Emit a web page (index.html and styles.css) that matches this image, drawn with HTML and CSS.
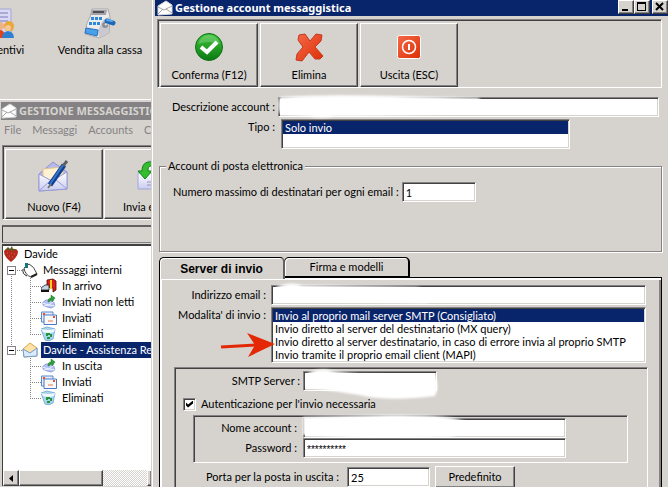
FILE: index.html
```html
<!DOCTYPE html>
<html lang="it">
<head>
<meta charset="utf-8">
<title>Gestione account messaggistica</title>
<link rel="stylesheet" href="styles.css">
</head>
<body>
<svg class="defs" aria-hidden="true">
  <defs>
    <linearGradient id="gGreen" x1="0" y1="0" x2="0" y2="1"><stop offset="0" stop-color="#3fc43a"/><stop offset="1" stop-color="#0b7a12"/></linearGradient>
    <linearGradient id="gRed" x1="0" y1="0" x2="1" y2="1"><stop offset="0" stop-color="#f5694a"/><stop offset="1" stop-color="#dd2f04"/></linearGradient>
    <linearGradient id="gEnv" x1="0" y1="0" x2="0" y2="1"><stop offset="0" stop-color="#ffffff"/><stop offset="1" stop-color="#c9ccf0"/></linearGradient>
    <symbol id="letter" viewBox="0 0 16 16">
      <path d="M1 6 L9 1 L15 5 V14 L1 15 Z" fill="#fff" stroke="#d8d8d8" stroke-width="1"/>
      <path d="M1 7 L7 10 L15 6 M1 14 L6 9 M15 13 L9 9" fill="none" stroke="#a5a5a5" stroke-width="1"/>
    </symbol>
    <symbol id="outbox" viewBox="0 0 16 16">
      <path d="M1 9 L5 6 H12 L14 12 L10 14 L3 12 Z" fill="#b3c2f8" stroke="#8fa2dc" stroke-width="1"/>
      <path d="M1 9 L8 11 L13 7 M3 12 L8 11 L14 12" fill="none" stroke="#eef2ff"/>
      <path d="M7 8 C7 5 8 4 10 4 V1 L14 4 L11 8 V6 C9 6 9 8 7 8 Z" fill="#2f9e35" stroke="#187a22" stroke-width=".5"/>
    </symbol>
    <symbol id="sent" viewBox="0 0 16 16">
      <path d="M.5 2 H12 V12 H.5 Z" fill="#e6ecfb" stroke="#5b86cc"/>
      <path d="M3 5 H15.500 V14.500 H3 Z" fill="#fbf8f6" stroke="#4a7ac6"/>
      <path d="M2 4 H4 M12 7 H14" stroke="#e2552c" stroke-width="2"/>
      <path d="M7 11 H12" stroke="#e07a4c" stroke-width="1"/>
    </symbol>
    <symbol id="bin" viewBox="0 0 16 16">
      <path d="M0 3 L6 1 L14 3 L12 13 Q8 16 4 14 Z" fill="#a9d4ee" stroke="#7fb2d4"/>
      <path d="M0 3 Q7 5 14 3 L13 6 Q7 8 2 6 Z" fill="#eef8fe"/>
      <path d="M6 10 V8 H9 M10 8 V11 M9 12 H6" fill="none" stroke="#23963a" stroke-width="2"/>
    </symbol>
  </defs>
</svg>

<div class="screen">
  <div class="left">
    <nav class="desktop">
      <a class="shortcut first" href="#">
        <svg width="32" height="32" viewBox="0 0 32 32">
          <path d="M4 1 H27 V25 H4 Z" fill="#d9d9f3" stroke="#a5a5d6"/>
          <path d="M8 5 H24 M8 9 H24 M8 13 H24" stroke="#a9aad8" stroke-width="2"/>
          <circle cx="16" cy="18" r="4" fill="#f0b183"/><path d="M10 30 Q10 22 16 22 Q21 22 21 30 Z" fill="#e2431b"/>
          <path d="M20 18 a5 5 0 0 1 10 0 q0 3 -2 5 h-6 q-2 -2 -2 -5 Z" fill="#e8a93a"/>
          <circle cx="24" cy="20" r="3" fill="#f6c79a"/><path d="M18 30 Q18 24 24 23 Q30 24 30 30 Z" fill="#2f7fd0"/>
        </svg>
        <span>Preventivi</span>
      </a>
      <a class="shortcut" href="#">
        <svg width="32" height="32" viewBox="0 0 32 32">
          <path d="M8 1 H24 L26 9 L25 25 L15 30 L1 26 L3 15 L6 9 Z" fill="#ececec" stroke="#a9a9ad"/>
          <path d="M19 12 L25 9 V25 L15 30 L14 22 Z" fill="#c9c9cf"/>
          <path d="M8 2 H23 L22 7 H7 Z" fill="#a2a2a8"/>
          <path d="M9 4 H20" stroke="#4e4e54" stroke-width="2"/>
          <g fill="#2d87da"><rect x="7" y="9" width="3" height="3"/><rect x="11" y="9" width="3" height="3"/><rect x="15" y="9" width="3" height="3"/><rect x="5" y="14" width="3" height="3"/><rect x="9" y="14" width="3" height="3"/><rect x="13" y="14" width="3" height="3"/></g>
          <path d="M2 20 L14 22 L13 28 L1 25 Z" fill="#4ba0ea" stroke="#2470bd"/>
          <circle cx="21" cy="17" r="3" fill="#8d8d93"/>
          <path d="M21 17 L25 14" stroke="#ddd" stroke-width="2"/>
          <path d="M23 13 L29 15" stroke="#1d67b8" stroke-width="5" stroke-linecap="round"/>
          <path d="M23 12 L28 13" stroke="#58aaf0" stroke-width="2" stroke-linecap="round"/>
        </svg>
        <span>Vendita alla cassa</span>
      </a>
    </nav>

    <section class="mailwin">
      <header class="caption idle"><svg width="16" height="16"><use href="#letter"/></svg><h2>GESTIONE MESSAGGISTICA</h2></header>
      <nav class="menu"><a href="#">File</a><a href="#">Messaggi</a><a href="#">Accounts</a><a href="#">Configurazione</a></nav>
      <div class="toolbar small">
        <button class="tool" type="button">
          <svg width="32" height="32" viewBox="0 0 32 32">
            <path d="M1 14 L15 2 L29 12 V29 L1 31 Z" fill="#b7b9e6" stroke="#8f91cf"/>
            <path d="M5 9 L25 7 V20 L5 22 Z" fill="#fff1d2" stroke="#e0c594"/>
            <path d="M1 14 L14 21 L29 12 V29 L1 31 Z" fill="url(#gEnv)" stroke="#9a9cd6"/>
            <path d="M1 31 L13 20 M29 29 L17 19" stroke="#9a9cd6" fill="none"/>
            <path d="M12 25 L26 5" stroke="#123f8e" stroke-width="5"/><path d="M12 24 L25 5" stroke="#3477cf" stroke-width="2"/>
            <path d="M25 6 L29 1" stroke="#5d6066" stroke-width="3"/><path d="M10 28 L13 24" stroke="#777" stroke-width="2"/>
          </svg>
          <span>Nuovo (F4)</span>
        </button>
        <button class="tool" type="button">
          <svg width="32" height="32" viewBox="0 0 32 32">
            <path d="M11 1 H30 V12 H11 Z" fill="#f2f2fb" stroke="#b6b7dd"/>
            <path d="M1 13 H31 V29 H1 Z" fill="url(#gEnv)" stroke="#a5a6d8"/>
            <path d="M10 22 H16 M10 25 H16" stroke="#9091c6"/>
            <path d="M15 2 C8 1 5 5 5 11 H1 L8 19 L15 11 H11 C11 7 12 6 15 6 Z" fill="#35bd2d" stroke="#14821a"/>
          </svg>
          <span>Invia e ricevi</span>
        </button>
      </div>
      <div class="strip"></div>
      <div class="treebox">
        <ul class="tree">
          <li class="row"><svg class="ic" width="16" height="16" viewBox="0 0 16 16"><path d="M1 5 Q3 2 8 3 Q13 2 15 5 Q15 11 8 16 Q1 11 1 5 Z" fill="#b52a1e"/><path d="M2 4 L5 1 L7 3 L9 0 L10 3 L14 3 L10 5 L7 4 Z" fill="#5d5a22"/><path d="M4 7 h1 M8 7 h1 M11 8 h1 M6 10 h1 M9 11 h1" stroke="#e0664e"/></svg><span class="lbl">Davide</span></li>
          <li class="row"><span class="cell start"><span class="box"></span></span><svg class="ic" width="16" height="16" viewBox="0 0 16 16"><path d="M2 6 L7 2 Q12 4 15 12 L9 15 Q3 13 2 6 Z" fill="#fff" stroke="#444"/><path d="M1 7 Q0 12 5 14" fill="none" stroke="#222" stroke-width="1"/><path d="M3 1 H6 V6 H3 Z" fill="#13787c"/><path d="M9 15 L15 12" stroke="#222" stroke-width="2"/></svg><span class="lbl">Messaggi interni</span></li>
          <li class="row"><span class="cell line"></span><span class="cell line arm"></span><svg class="ic" width="16" height="16" viewBox="0 0 16 16"><path d="M6 2 L12 1 L15 3 V12 L12 14 V10 L6 9 Z" fill="#d8201a" stroke="#4a0b08" stroke-width=".8"/><path d="M10 2 V11" stroke="#ffcf1c" stroke-width="2"/><path d="M0 10 L4 7 H8 V12 H0 Z" fill="#c6d4e6" stroke="#222" stroke-width=".8"/><path d="M0 13 H8" stroke="#111" stroke-width="2"/></svg><span class="lbl">In arrivo</span></li>
          <li class="row"><span class="cell line"></span><span class="cell line arm"></span><svg class="ic" width="16" height="16"><use href="#outbox"/></svg><span class="lbl">Inviati non letti</span></li>
          <li class="row"><span class="cell line"></span><span class="cell line arm"></span><svg class="ic" width="16" height="16"><use href="#sent"/></svg><span class="lbl">Inviati</span></li>
          <li class="row"><span class="cell line"></span><span class="cell end arm"></span><svg class="ic" width="16" height="16"><use href="#bin"/></svg><span class="lbl">Eliminati</span></li>
          <li class="row"><span class="cell end"><span class="box"></span></span><svg class="ic" width="16" height="16" viewBox="0 0 16 16"><path d="M1 7 L8 1 L15 6 V14 L2 15 Z" fill="#ffe3a6" stroke="#d9a648"/><path d="M1 7 L8 11 L15 6 V14 L2 15 Z" fill="#dcebfb" stroke="#6d9cce"/></svg><span class="lbl on">Davide - Assistenza Remota</span></li>
          <li class="row"><span class="cell"></span><span class="cell line arm"></span><svg class="ic" width="16" height="16"><use href="#outbox"/></svg><span class="lbl">In uscita</span></li>
          <li class="row"><span class="cell"></span><span class="cell line arm"></span><svg class="ic" width="16" height="16"><use href="#sent"/></svg><span class="lbl">Inviati</span></li>
          <li class="row"><span class="cell"></span><span class="cell end arm"></span><svg class="ic" width="16" height="16"><use href="#bin"/></svg><span class="lbl">Eliminati</span></li>
        </ul>
        <div class="hscroll">
          <button class="sbtn" type="button" aria-label="Scorri a sinistra"><svg width="4" height="7" viewBox="0 0 4 7"><path d="M4 0 V7 L0 3.500 Z"/></svg></button>
          <div class="thumb"></div>
          <div class="track"></div>
          <button class="sbtn" type="button" aria-label="Scorri a destra"></button>
        </div>
      </div>
    </section>
  </div>

  <main class="dialog">
    <header class="caption"><svg width="16" height="16"><use href="#letter"/></svg><h1>Gestione account messaggistica</h1>
      <div class="winbtns">
        <button type="button" aria-label="Riduci"><svg width="12" height="10" viewBox="0 0 12 10"><path d="M2 7 H8 V9 H2 Z"/></svg></button>
        <button type="button" aria-label="Ingrandisci"><svg width="12" height="10" viewBox="0 0 12 10"><path d="M1 0 H10 V9 H1 Z M2 2 V8 H9 V2 Z" fill-rule="evenodd"/></svg></button>
        <button type="button" class="close" aria-label="Chiudi"><svg width="12" height="10" viewBox="0 0 12 10"><path d="M2 1 L9 8 M9 1 L2 8" stroke="#000" stroke-width="2"/></svg></button>
      </div>
    </header>
    <div class="body">
      <div class="toolbar">
        <button class="tool" type="button">
          <svg width="32" height="32" viewBox="0 0 32 32"><circle cx="16" cy="16" r="13.500" fill="url(#gGreen)" stroke="#0c7314"/><path d="M5 13 Q8 4 16 4 Q24 4 27 13 Q16 9 5 13Z" fill="#fff" opacity=".2"/><path d="M8 16 L14 21 L24 11" fill="none" stroke="#fff" stroke-width="4"/></svg>
          <span>Conferma (F12)</span>
        </button>
        <button class="tool" type="button">
          <svg width="32" height="32" viewBox="0 0 32 32"><path d="M6 4 L12 3 L17 10 L23 3 L29 4 L28 10 L22 16 L30 25 L27 28 L22 28 L16 21 L9 30 L3 29 L4 23 L10 16 L5 9 Z" fill="url(#gRed)" stroke="#c43a20" stroke-linejoin="round"/></svg>
          <span>Elimina</span>
        </button>
        <button class="tool" type="button">
          <svg width="32" height="32" viewBox="0 0 32 32"><rect x="4.500" y="4.500" width="23" height="23" rx="2" fill="url(#gRed)" stroke="#fff"/><circle cx="16" cy="16" r="6.500" fill="none" stroke="#fff" stroke-width="1.500"/><path d="M16 13 V19" stroke="#fff" stroke-width="2"/></svg>
          <span>Uscita (ESC)</span>
        </button>
      </div>

      <form class="form">
        <div class="line top">
          <label for="descr">Descrizione account :</label>
          <div class="field smudged">
            <input id="descr" type="text">
            <svg class="smudge" width="224" height="28" viewBox="0 0 224 28"><path d="M6 4 Q50 1 120 3 L204 5 Q216 12 206 20 Q100 23 60 23 Q48 26 34 23 L6 21 Q3 12 6 4 Z"/></svg>
          </div>
        </div>
        <div class="line top type">
          <label for="tipo">Tipo :</label>
          <select id="tipo" class="list two" size="2"><option selected>Solo invio</option></select>
        </div>

        <fieldset class="group">
          <legend>Account di posta elettronica</legend>
          <div class="line max"><label for="max">Numero massimo di destinatari per ogni email :</label><input id="max" class="short" type="text" value="1"></div>
        </fieldset>

        <div class="tabs" role="tablist">
          <button class="tab active" type="button" role="tab" aria-selected="true">Server di invio</button>
          <button class="tab" type="button" role="tab" aria-selected="false">Firma e modelli</button>
        </div>
        <div class="page">
          <div class="line mail">
            <label for="mail">Indirizzo email :</label>
            <div class="field smudged">
              <input id="mail" type="text">
              <svg class="smudge" width="190" height="26" viewBox="0 0 190 26"><path d="M9 6 Q22 0 36 4 L150 6 Q172 12 160 22 L110 21 L9 19 Z"/></svg>
            </div>
          </div>
          <div class="line mail mode">
            <label for="mode">Modalita' di invio :</label>
            <div class="field">
              <select id="mode" class="list four" size="4">
                <option selected>Invio al proprio mail server SMTP (Consigliato)</option>
                <option>Invio diretto al server del destinatario (MX query)</option>
                <option>Invio diretto al server destinatario, in caso di errore invia al proprio SMTP</option>
                <option>Invio tramite il proprio email client (MAPI)</option>
              </select>
              <svg class="arrow" width="58" height="26" viewBox="0 0 58 26"><path d="M1 15 L36 13" stroke="#e42806" stroke-width="3"/><path d="M27 1 L55 12 L28 25 L35 13 Z" fill="#e42806"/></svg>
            </div>
          </div>

          <div class="panel smtp">
            <div class="line server">
              <label for="smtp">SMTP Server :</label>
              <div class="field smudged">
                <input id="smtp" type="text">
                <svg class="smudge" width="150" height="38" viewBox="0 0 150 38"><path d="M7 7 Q20 0 34 4 L60 7 L136 9 Q141 20 136 29 Q90 35 60 28 L7 20 Z"/></svg>
              </div>
            </div>
            <label class="check"><input type="checkbox" checked><span>Autenticazione per l'invio necessaria</span></label>
            <div class="panel auth">
              <div class="line cred">
                <label for="user">Nome account :</label>
                <div class="field smudged">
                  <input id="user" type="text">
                  <svg class="smudge" width="180" height="30" viewBox="0 0 180 30"><path d="M4 3 L90 1 Q150 0 168 8 Q170 20 150 23 L70 25 L4 21 Z"/></svg>
                </div>
              </div>
              <div class="line cred"><label for="pwd">Password :</label><div class="field"><input id="pwd" class="pwd" type="text" value="**********"></div></div>
            </div>
            <div class="line port">
              <label for="port">Porta per la posta in uscita :</label><input id="port" class="short" type="text" value="25">
              <button class="push" type="button">Predefinito</button>
            </div>
          </div>
        </div>
      </form>
    </div>
  </main>
</div>
</body>
</html>
```
FILE: styles.css
```css
* { box-sizing: border-box; }

body {
  margin: 0;
  height: 100vh;
  overflow: hidden;
  background: #d6d3ce;
  color: #000;
  font: 11px/16px Lato, "Liberation Sans", Arial, sans-serif;
}

button, input, select { font: inherit; color: inherit; border-radius: 0; margin: 0; }
button { background: #d6d3ce; padding: 0; }
a { color: inherit; text-decoration: none; }
h1, h2 { margin: 0; font: bold 11px/16px "Noto Sans", "Liberation Sans", sans-serif; white-space: nowrap; }
svg { flex: none; display: block; }
.defs { position: absolute; width: 0; height: 0; }

.screen { display: grid; grid-template-columns: 152px minmax(0, 1fr); height: 100%; }
.left { display: flex; flex-direction: column; min-width: 0; padding-right: 1px; overflow: hidden; }
.left > * { min-width: 0; overflow: hidden; }

/* Desktop shortcuts */
.desktop { display: flex; height: 99px; padding-top: 8px; flex: none; }
.shortcut { flex: none; width: 100px; display: flex; flex-direction: column; align-items: center; gap: 2px; }
.shortcut.first { margin-left: -50px; }

/* Title bars */
.caption { display: flex; align-items: center; gap: 2px; height: 16px; background: #08246b; color: #fff; padding-left: 2px; }
.caption.idle { height: 18px; background: #848284; color: #d6d3ce; padding-left: 0; flex: none; overflow: hidden; }

/* Mail window */
.mailwin { flex: 1; min-height: 0; display: flex; flex-direction: column; border-top: 1px solid #fff; padding: 2px 0 0 1px; }
.menu { display: flex; gap: 11px; padding: 2px 3px 7px; color: #848284; white-space: nowrap; }

.toolbar {
  display: flex;
  gap: 2px;
  padding: 2px 1px 0;
  height: 69px;
  border: 1px solid;
  border-color: #848284 #fff #fff #848284;
  box-shadow: inset 1px 1px #424142;
}
.toolbar.small { height: 75px; flex: none; margin-left: 1px; overflow: hidden; border-right: 0; gap: 1px; }
.tool {
  flex: none;
  width: 98px;
  height: 64px;
  margin: 1px -1px 0 1px;
  display: flex;
  flex-direction: column;
  align-items: center;
  gap: 4px;
  padding-top: 7px;
  border: 1px solid;
  border-color: #fff #424142 #424142 #fff;
  box-shadow: inset -1px -1px #848284;
  white-space: nowrap;
}
.toolbar.small .tool { height: 70px; gap: 7px; padding-top: 10px; }
.strip { flex: none; height: 18px; margin: 5px 0 1px 1px; border-top: 2px solid #636163; border-left: 1px solid #424142; border-bottom: 1px solid #848284; }

.treebox {
  flex: 1;
  min-height: 0;
  display: flex;
  flex-direction: column;
  justify-content: space-between;
  background: #fff;
  margin: 0 0 1px 1px;
  border-top: 2px solid #424142;
  border-left: 1px solid #424142;
}
.tree { list-style: none; margin: 0; padding: 0; }
.row { display: flex; height: 16px; white-space: nowrap; }
.lbl { padding: 0 2px; margin-left: 3px; }
.lbl.on { background: #08246b; color: #fff; }
.cell { flex: none; width: 19px; height: 16px; display: block; padding: 4px; background-repeat: no-repeat; }
.cell.line, .cell.start, .cell.end { background-image: repeating-linear-gradient(#848284 0 1px, transparent 1px 2px), repeating-linear-gradient(90deg, #848284 0 1px, transparent 1px 2px); }
.cell.line { background-size: 1px 16px, 0 0; background-position: 8px 0, 8px 8px; }
.cell.end { background-size: 1px 8px, 11px 1px; background-position: 8px 0, 8px 8px; }
.cell.start { background-size: 1px 8px, 11px 1px; background-position: 8px 8px, 8px 8px; }
.cell.line.arm { background-size: 1px 16px, 11px 1px; }
.box { display: block; width: 9px; height: 9px; border: 1px solid #848284; background: linear-gradient(#000, #000) center / 5px 1px no-repeat #fff; }

.hscroll { display: flex; height: 16px; background: #d6d3ce; }
.sbtn, .thumb { border: 1px solid; border-color: #fff #424142 #424142 #fff; box-shadow: inset -1px -1px #848284; }
.sbtn { flex: none; width: 16px; display: grid; place-items: center; }
.thumb { flex: none; width: 84px; }
.track { flex: 1; background: repeating-conic-gradient(#fff 0 25%, #d6d3ce 0 50%) 0 0 / 2px 2px; }
.sbtn:last-child { width: 4px; border-right: 0; }

/* Account dialog */
.dialog { border-left: 1px solid #fff; padding-left: 2px; min-width: 0; height: 100%; overflow: hidden; }
.winbtns { margin-left: auto; display: flex; align-self: flex-start; }
.winbtns button {
  width: 16px;
  height: 14px;
  padding: 1px;
  border: 1px solid;
  border-color: #fff #424142 #424142 #fff;
  box-shadow: inset -1px -1px #848284;
  overflow: hidden;
}
.winbtns .close { margin-left: 2px; }
.body { padding: 3px 6px 0 2px; }

input[type="text"] {
  display: block;
  width: 100%;
  height: 20px;
  padding: 0 3px;
  background: #fff;
  border: 1px solid;
  border-color: #848284 #fff #fff #848284;
  box-shadow: inset 1px 1px #424142, inset -1px -1px #d6d3ce;
  outline: 0;
}
input[type="text"].short { width: 80px; flex: none; }
input.pwd { font: 10px/16px "Liberation Sans", Arial, sans-serif; padding-top: 3px; }

.line { display: flex; align-items: center; gap: 6px; }
.line label { flex: none; text-align: right; white-space: nowrap; }
.line.max { gap: 3px; }
.line.max input[type="text"].short { width: 74px; }
.field { position: relative; flex: 1; min-width: 0; }

.list {
  display: block;
  width: 100%;
  padding: 1px;
  background: #fff;
  border: 1px solid;
  border-color: #848284 #fff #fff #848284;
  box-shadow: inset 1px 1px #424142, inset -1px -1px #d6d3ce;
  outline: 0;
  overflow: hidden;
  scrollbar-width: none;
}
.list option { height: 13px; min-height: 13px; padding: 0 2px; line-height: 13px; }
.list option:checked { background: linear-gradient(#08246b, #08246b); color: #fff; -webkit-text-fill-color: #fff; }
.list.two { width: 289px; height: 30px; }
.list.four { height: 56px; }

.form { padding-left: 2px; }
.line.top { margin: 9px 3px 0 0; gap: 3px; }
.line.top label { width: 116px; }
.line.top.type { margin-top: 2px; align-items: flex-start; gap: 6px; }

.group { margin: 8px 0 5px; padding: 7px 13px 49px; border: 1px solid #848284; box-shadow: 1px 1px #fff, inset 1px 1px #fff; min-width: 0; }
.group legend { padding: 0 2px; margin-left: -7px; line-height: 18px; background: #d6d3ce; }

.tabs { display: flex; align-items: flex-end; }
.tab { height: 20px; width: 126px; border: 1px solid #000; border-right-width: 2px; border-radius: 5px 5px 0 0; box-shadow: inset 1px 1px #fff; margin-left: -1px; }
.tab.active { height: 22px; margin: 0 0 -2px; border-bottom: 0; border-right-color: #636163; font: bold 12px/16px "Liberation Sans", Arial, sans-serif; position: relative; }

.page { border: 1px solid #000; border-bottom: 0; box-shadow: inset 2px 2px #fff, inset -2px 0 #848284; padding: 7px 13px 0 14px; }
.line.mail { gap: 5px; padding-right: 2px; }
.line.mail label { width: 92px; }
.line.mode { align-items: flex-start; margin-top: 2px; }
.arrow { position: absolute; left: -51px; top: 25px; }

.panel { border: 1px solid; border-color: #848284 #fff #fff #848284; box-shadow: inset 1px 1px #424142; }
.smtp { margin-top: 4px; padding: 3px 19px 8px 8px; }
.line.server { gap: 3px; }
.line.server label { width: 117px; }
.line.server .field { flex: none; width: 134px; }
.check { display: flex; align-items: center; gap: 5px; height: 16px; margin-top: 5px; }
.check input {
  appearance: none;
  display: grid;
  place-items: center;
  width: 13px;
  height: 13px;
  border: 1px solid;
  border-color: #848284 #fff #fff #848284;
  box-shadow: inset 1px 1px #424142, inset -1px -1px #d6d3ce;
  background: #fff;
}
.check input:checked::before { content: ""; width: 7px; height: 7px; background: #000; clip-path: polygon(0 29%, 29% 57%, 100% 0, 100% 43%, 29% 100%, 0 72%); }
.auth { margin: 3px 0 0 10px; padding: 2px 61px 4px 4px; }
.line.cred { gap: 6px; }
.line.cred label { width: 99px; }
.line.port { gap: 5px; margin: 3px 0 0 20px; }
.line.port label { width: 136px; margin-right: 3px; }
.line.port input[type="text"].short { width: 83px; }
.push { width: 80px; height: 22px; border: 1px solid; border-color: #fff #424142 #424142 #fff; box-shadow: inset -1px -1px #848284; }

/* Whited-out private values */
.smudge { position: absolute; left: -4px; top: -4px; fill: #fff; filter: blur(1px); pointer-events: none; overflow: visible; }
```
